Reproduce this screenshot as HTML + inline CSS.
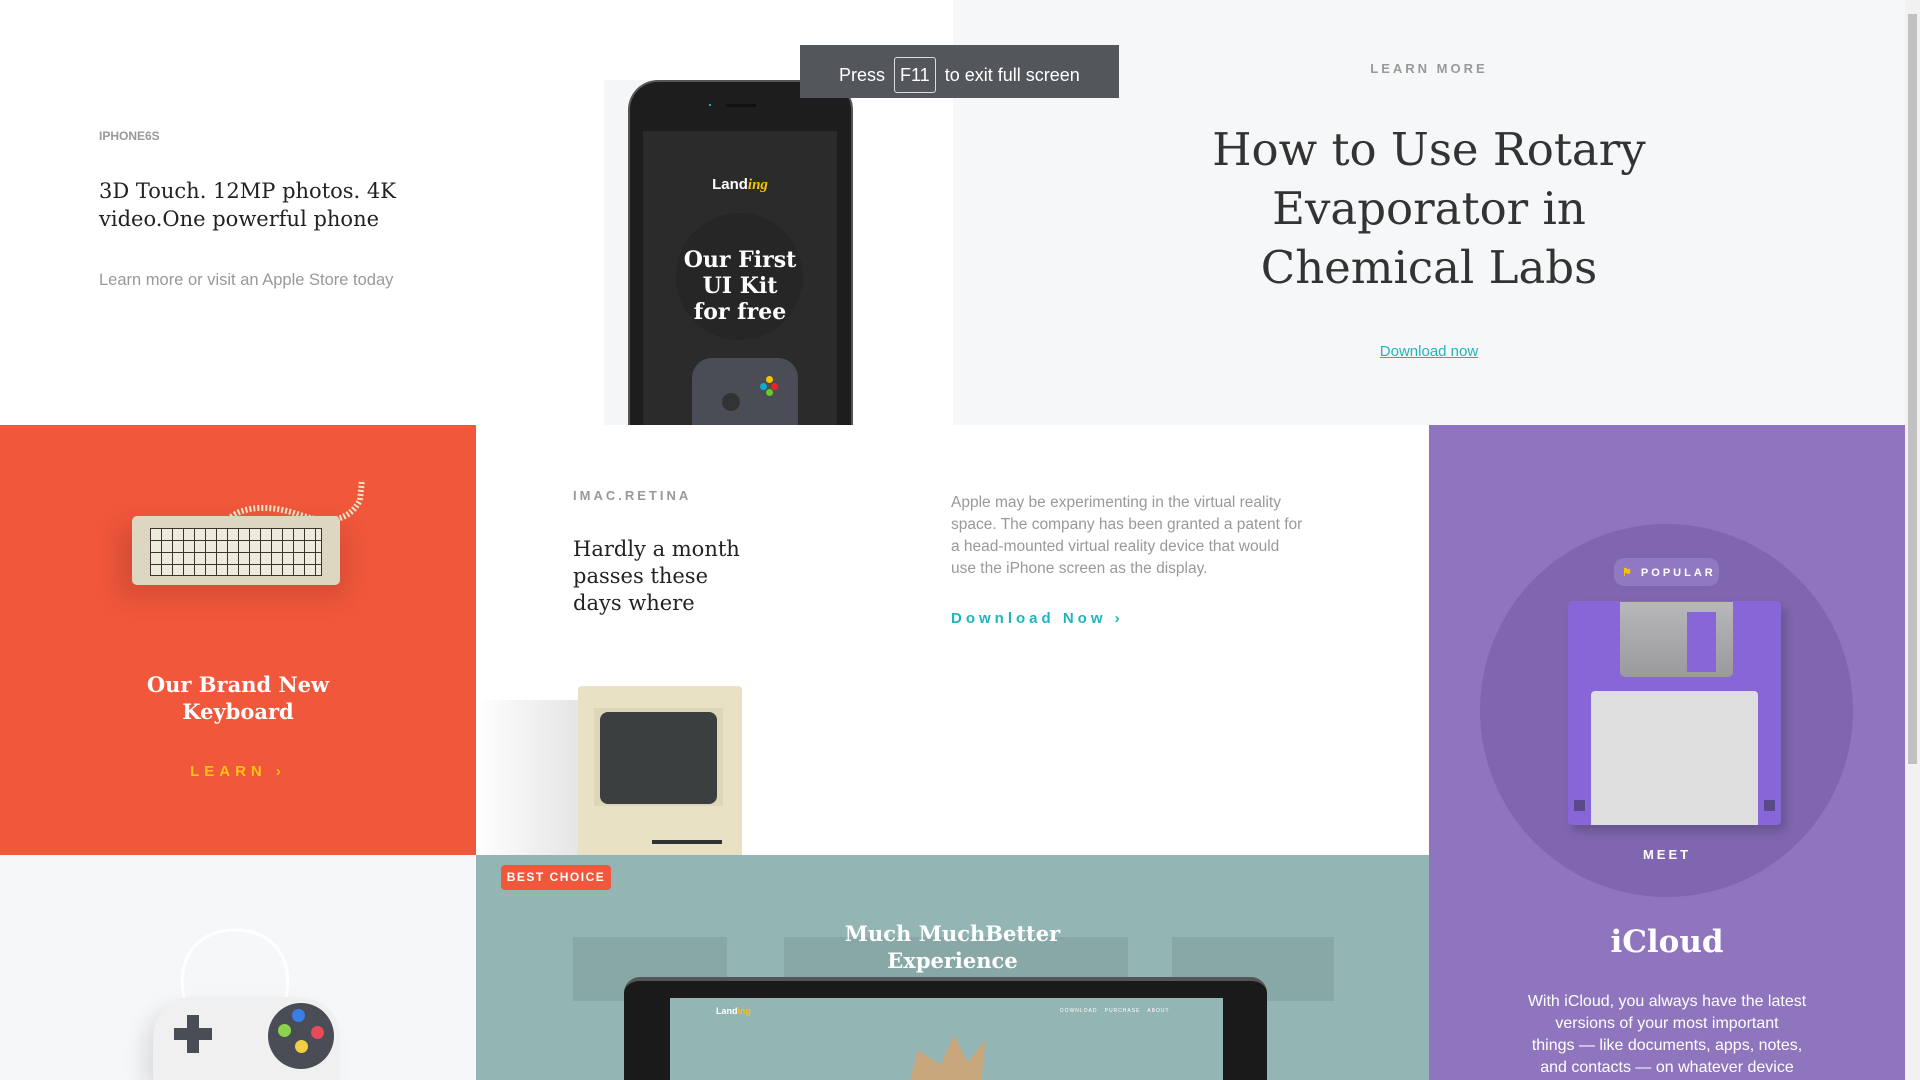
<!DOCTYPE html>
<html style="overflow:hidden;width:1920px;height:1080px"><head><meta charset="utf-8"><style>
*{margin:0;padding:0;box-sizing:border-box}
body{width:1920px;height:1080px;overflow:hidden;position:relative;background:#fff;font-family:"Liberation Sans",sans-serif}
.a{position:absolute}
.serif{font-family:"DejaVu Serif","Liberation Serif",serif}
.c{text-align:center}
</style></head><body>
<div class="a" style="left:0;top:0;width:953px;height:425px;background:#fff"></div>
<div class="a" style="left:99px;top:129px;font-size:12px;font-weight:bold;color:#999">IPHONE6S</div>
<div class="a serif" style="left:99px;top:177px;font-size:21px;line-height:28px;color:#222;width:320px">3D Touch. 12MP photos. 4K video.One powerful phone</div>
<div class="a" style="left:99px;top:271px;font-size:16.5px;color:#999">Learn more or visit an Apple Store today</div>
<div class="a" style="left:604px;top:80px;width:249px;height:345px;background:#f5f6f8"></div>
<div class="a" style="left:628px;top:80px;width:225px;height:345px;background:#1d1d1d;border-radius:30px 30px 0 0;border:2px solid #555;border-bottom:none"></div>
<div class="a" style="left:643px;top:131px;width:194px;height:294px;background:#2b2b2b"></div>
<div class="a" style="left:709px;top:104px;width:2px;height:2px;background:#2aa"></div>
<div class="a" style="left:726px;top:104px;width:30px;height:3px;background:#111;border-radius:2px"></div>
<div class="a c" style="left:643px;top:176px;width:194px;font-size:15px;font-weight:bold;color:#fff">Land<i style="color:#f5c400;font-family:'Liberation Serif',serif">ing</i></div>
<div class="a" style="left:676px;top:213px;width:127px;height:127px;border-radius:50%;background:#262626"></div>
<div class="a c serif" style="left:643px;top:247px;width:194px;font-size:22px;line-height:26px;font-weight:bold;color:#fff">Our First<br>UI Kit<br>for free</div>
<div class="a" style="left:692px;top:358px;width:106px;height:67px;background:#4a4d55;border-radius:20px 20px 0 0"></div>
<div class="a" style="left:766px;top:376px;width:7px;height:7px;border-radius:50%;background:#f5c400"></div>
<div class="a" style="left:760px;top:383px;width:7px;height:7px;border-radius:50%;background:#1ac"></div>
<div class="a" style="left:771px;top:383px;width:7px;height:7px;border-radius:50%;background:#e22"></div>
<div class="a" style="left:766px;top:389px;width:7px;height:7px;border-radius:50%;background:#6c2"></div>
<div class="a" style="left:722px;top:393px;width:18px;height:18px;border-radius:50%;background:#333"></div>
<div class="a" style="left:953px;top:0;width:952px;height:425px;background:#f6f7f9"></div>
<div class="a c" style="left:953px;top:61px;width:952px;font-size:13px;font-weight:bold;letter-spacing:3px;color:#999">LEARN MORE</div>
<div class="a c serif" style="left:953px;top:120px;width:952px;font-size:45px;line-height:59px;color:#333">How to Use Rotary<br>Evaporator in<br>Chemical Labs</div>
<div class="a c" style="left:953px;top:343px;width:952px;font-size:15px;color:#1fb5c0;text-decoration:underline">Download now</div>
<div class="a" style="left:800px;top:45px;width:319px;height:53px;background:#53565b"></div>
<div class="a" style="left:839px;top:57px;font-size:18px;color:#fff;line-height:26px">Press <span style="display:inline-block;border:1px solid #ddd;border-radius:3px;padding:0 5px;margin:0 4px;line-height:34px;">F11</span> to exit full screen</div>
<div class="a" style="left:0;top:425px;width:476px;height:430px;background:#f0573b"></div>
<div class="a" style="left:120px;top:526px;width:225px;height:70px;background:rgba(0,0,0,.12);filter:blur(12px)"></div>
<svg class="a" style="left:200px;top:470px" width="170" height="70"><path d="M25 65 C20 40 60 30 100 45 C130 55 150 50 160 30 L162 10" fill="none" stroke="#e8e2c8" stroke-width="6" stroke-dasharray="2 2"/></svg>
<div class="a" style="left:132px;top:516px;width:208px;height:69px;background:#ddd7c2;border-radius:5px"></div>
<div class="a" style="left:150px;top:528px;width:172px;height:48px;background:#3a352b;padding:1px"><div style="width:100%;height:100%;background:repeating-linear-gradient(90deg,#eeeadc 0 10px,transparent 10px 11px)"></div></div>
<div class="a" style="left:150px;top:528px;width:172px;height:48px;background:repeating-linear-gradient(0deg,transparent 0 11px,#3a352b 11px 12px)"></div>
<div class="a c serif" style="left:0;top:671px;width:476px;font-size:21px;line-height:27px;font-weight:bold;color:#fff">Our Brand New<br>Keyboard</div>
<div class="a c" style="left:0;top:763px;width:476px;font-size:15px;font-weight:bold;letter-spacing:5px;color:#ffc20e">LEARN ›</div>
<div class="a" style="left:476px;top:425px;width:953px;height:430px;background:#fff"></div>
<div class="a" style="left:573px;top:488px;font-size:13px;font-weight:bold;letter-spacing:3px;color:#999">IMAC.RETINA</div>
<div class="a serif" style="left:573px;top:536px;width:200px;font-size:21px;line-height:27px;color:#222">Hardly a month<br>passes these<br>days where</div>
<div class="a" style="left:951px;top:492px;width:390px;font-size:15.5px;line-height:22px;color:#999">Apple may be experimenting in the virtual reality<br>space. The company has been granted a patent for<br>a head-mounted virtual reality device that would<br>use the iPhone screen as the display.</div>
<div class="a" style="left:951px;top:610px;font-size:15px;font-weight:bold;letter-spacing:4px;color:#1fb5c0">Download Now ›</div>
<div class="a" style="left:476px;top:700px;width:110px;height:155px;background:linear-gradient(90deg,#fff,#e3e3e3)"></div>
<div class="a" style="left:578px;top:686px;width:164px;height:169px;background:#e8e1c3;border-radius:4px 4px 0 0"></div>
<div class="a" style="left:594px;top:708px;width:129px;height:98px;background:#ddd6b8"></div>
<div class="a" style="left:600px;top:712px;width:117px;height:92px;background:#3c3f3f;border-radius:8px"></div>
<div class="a" style="left:652px;top:840px;width:70px;height:4px;background:#333"></div>
<div class="a" style="left:1429px;top:425px;width:476px;height:655px;background:#8f75bd"></div>
<div class="a" style="left:1480px;top:524px;width:373px;height:373px;border-radius:50%;background:#8066b0"></div>
<div class="a" style="left:1614px;top:558px;width:105px;height:28px;border-radius:10px;background:#9079c0"></div>
<div class="a" style="left:1622px;top:566px;font-size:11px;font-weight:bold;letter-spacing:3px;color:#fff"><span style="color:#f5c400">⚑</span> POPULAR</div>
<div class="a" style="left:1568px;top:601px;width:213px;height:224px;background:#8766d8;border-radius:4px;box-shadow:4px 6px 10px rgba(0,0,0,.2)"></div>
<div class="a" style="left:1620px;top:602px;width:113px;height:75px;background:linear-gradient(#b8b8ba,#9a9a9c);border-radius:0 0 5px 5px"></div>
<div class="a" style="left:1687px;top:612px;width:29px;height:60px;background:#8766d8"></div>
<div class="a" style="left:1591px;top:691px;width:167px;height:134px;background:#dedede;border-radius:4px 4px 0 0"></div>
<div class="a" style="left:1574px;top:800px;width:11px;height:11px;background:#5a4a8a"></div>
<div class="a" style="left:1764px;top:800px;width:11px;height:11px;background:#5a4a8a"></div>
<div class="a c" style="left:1429px;top:847px;width:476px;font-size:13px;font-weight:bold;letter-spacing:3px;color:#fff">MEET</div>
<div class="a c serif" style="left:1429px;top:924px;width:476px;font-size:31px;font-weight:bold;color:#fff">iCloud</div>
<div class="a c" style="left:1429px;top:991px;width:476px;font-size:16px;line-height:22px;color:#fff">With iCloud, you always have the latest<br>versions of your most important<br>things — like documents, apps, notes,<br>and contacts — on whatever device</div>
<div class="a" style="left:0;top:855px;width:476px;height:225px;background:#f6f7f9"></div>
<svg class="a" style="left:150px;top:920px" width="170" height="100"><path d="M40 95 C20 50 40 10 85 10 C130 10 150 50 130 95" fill="none" stroke="#fff" stroke-width="3"/></svg>
<div class="a" style="left:153px;top:997px;width:187px;height:83px;background:#f0f0f0;border-radius:40px 40px 0 0;box-shadow:-10px 10px 20px rgba(0,0,0,.1)"></div>
<div class="a" style="left:174px;top:1028px;width:38px;height:12px;background:#4a4d55"></div>
<div class="a" style="left:187px;top:1015px;width:12px;height:38px;background:#4a4d55"></div>
<div class="a" style="left:268px;top:1003px;width:66px;height:66px;border-radius:50%;background:#4a4d55"></div>
<div class="a" style="left:292px;top:1009px;width:13px;height:13px;border-radius:50%;background:#3a7ee8"></div>
<div class="a" style="left:278px;top:1024px;width:13px;height:13px;border-radius:50%;background:#8bd34a"></div>
<div class="a" style="left:311px;top:1026px;width:13px;height:13px;border-radius:50%;background:#e84a5a"></div>
<div class="a" style="left:295px;top:1040px;width:13px;height:13px;border-radius:50%;background:#f0d040"></div>
<div class="a" style="left:476px;top:855px;width:953px;height:225px;background:#93b6b5;overflow:hidden">
<div class="a" style="left:97px;top:82px;width:154px;height:64px;background:#88a8a7"></div>
<div class="a" style="left:308px;top:82px;width:344px;height:64px;background:#88a8a7"></div>
<div class="a" style="left:696px;top:82px;width:162px;height:64px;background:#88a8a7"></div>
<div class="a" style="left:25px;top:10px;width:110px;height:25px;background:#f0573b;border-radius:4px;color:#fff;font-size:12px;font-weight:bold;letter-spacing:1.5px;line-height:25px;text-align:center">BEST CHOICE</div>
<div class="a c serif" style="left:0;top:65px;width:953px;font-size:21px;line-height:27px;font-weight:bold;color:#fff">Much MuchBetter<br>Experience</div>
<div class="a" style="left:148px;top:122px;width:643px;height:120px;background:#1a1a1a;border-radius:16px 16px 0 0;border-top:4px solid #555"></div>
<div class="a" style="left:194px;top:143px;width:553px;height:90px;background:#93b6b5"></div>
<div class="a" style="left:240px;top:151px;font-size:9px;font-weight:bold;color:#fff">Land<span style="color:#f5c400">ing</span></div>
<div class="a" style="left:584px;top:153px;font-size:5px;color:#fff;letter-spacing:1px">DOWNLOAD &nbsp; PURCHASE &nbsp; ABOUT</div>
<div class="a" style="left:424px;top:180px;width:90px;height:50px;background:#c9a77c;clip-path:polygon(10% 100%,20% 30%,45% 60%,60% 0,75% 55%,95% 10%,90% 100%)"></div>
</div>
<div class="a" style="left:1905px;top:0;width:15px;height:1080px;background:#f1f1f1"></div>
<div class="a" style="left:1908px;top:14px;width:9px;height:750px;background:#c1c1c1"></div>
</body></html>
